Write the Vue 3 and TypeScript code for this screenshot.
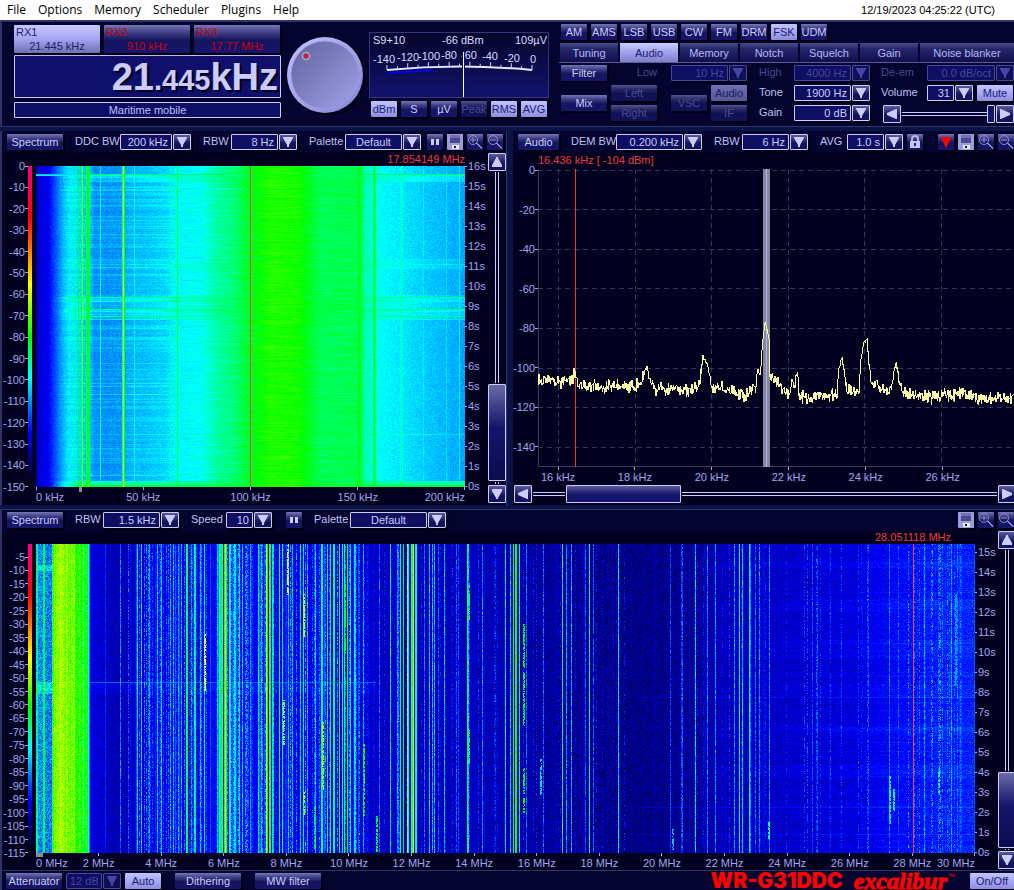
<script setup lang="ts">
import { onMounted, ref } from 'vue'

interface Combo {
  label: string
  labelWidth: number
  value: string
  width: number
  center?: boolean
}
type Stop = [number, number]

const menu = ['File', 'Options', 'Memory', 'Scheduler', 'Plugins', 'Help']
const receivers = [
  { name: 'RX1', freq: '21.445 kHz', on: true },
  { name: 'RX2', freq: '910 kHz', on: false },
  { name: 'RX3', freq: '17.77 MHz', on: false },
]
const meterButtons = [
  { t: 'dBm', c: 'on' },
  { t: 'S', c: '' },
  { t: 'µV', c: '' },
  { t: 'Peak', c: 'dim' },
  { t: 'RMS', c: 'on' },
  { t: 'AVG', c: 'on' },
]
const modes = ['AM', 'AMS', 'LSB', 'USB', 'CW', 'FM', 'DRM', 'FSK', 'UDM']
const tabs = ['Tuning', 'Audio', 'Memory', 'Notch', 'Squelch', 'Gain', 'Noise blanker']
const meterScale = [
  { t: '-140', x: 4, y: 31 },
  { t: '-120', x: 28, y: 29 },
  { t: '-100', x: 49, y: 28 },
  { t: '-80', x: 72, y: 27 },
  { t: '-60', x: 92, y: 27 },
  { t: '-40', x: 113, y: 28 },
  { t: '-20', x: 135, y: 30 },
  { t: '0', x: 161, y: 31 },
]
const meterTicks = Array.from({ length: 15 }, (_, i) => {
  const t = i / 14
  const x = 18 + 145 * t
  const y = 38 - 14 * t * (1 - t)
  return { x, y, h: i % 2 ? 3 : 5 }
})

const ddcCombos: Combo[] = [
  { label: 'DDC BW', labelWidth: 45, value: '200 kHz', width: 52 },
  { label: 'RBW', labelWidth: 28, value: '8 Hz', width: 47 },
  { label: 'Palette', labelWidth: 36, value: 'Default', width: 57, center: true },
]
const demCombos: Combo[] = [
  { label: 'DEM BW', labelWidth: 45, value: '0.200 kHz', width: 67 },
  { label: 'RBW', labelWidth: 28, value: '6 Hz', width: 47 },
  { label: 'AVG', labelWidth: 27, value: '1.0 s', width: 37 },
]
const wideCombos: Combo[] = [
  { label: 'RBW', labelWidth: 28, value: '1.5 kHz', width: 57 },
  { label: 'Speed', labelWidth: 35, value: '10', width: 27 },
]

const range = (n: number, f: (i: number) => string) => Array.from({ length: n }, (_, i) => f(i))
const ddcLevels = range(16, (i) => `${-10 * i}`)
const demLevels = range(8, (i) => `${-20 * i}`)
const wideLevels = range(23, (i) => `${-5 * (i + 1)}`)
const ddcTimes = range(17, (i) => `${16 - i}s`)
const wideTimes = range(16, (i) => `${15 - i}s`)
const ddcFreqs = range(5, (i) => `${50 * i} kHz`)
const demFreqs = range(6, (i) => `${16 + 2 * i} kHz`)
const wideFreqs = range(16, (i) => `${2 * i} MHz`)

function generator(seed: number) {
  let s = seed
  return () => {
    s = (s + 0x6d2b79f5) | 0
    let t = Math.imul(s ^ (s >>> 15), 1 | s)
    t = (t + Math.imul(t ^ (t >>> 7), 61 | t)) ^ t
    return ((t ^ (t >>> 14)) >>> 0) / 4294967296
  }
}

function interpolate(stops: Stop[], x: number) {
  for (let i = 1; i < stops.length; i++) {
    if (x <= stops[i][0]) {
      const [x0, y0] = stops[i - 1]
      const [x1, y1] = stops[i]
      return y0 + ((y1 - y0) * (x - x0)) / (x1 - x0)
    }
  }
  return stops[stops.length - 1][1]
}

const palette: [number, number, number, number][] = [
  [0, 0, 0, 10],
  [0.17, 0, 0, 255],
  [0.34, 0, 255, 255],
  [0.47, 0, 255, 0],
  [0.63, 255, 255, 0],
  [0.835, 255, 0, 0],
  [1, 255, 0, 128],
]
function color(v: number): [number, number, number] {
  const c = Math.max(0, Math.min(1, v))
  for (let i = 1; i < palette.length; i++) {
    if (c <= palette[i][0]) {
      const a = palette[i - 1]
      const b = palette[i]
      const t = (c - a[0]) / (b[0] - a[0])
      return [a[1] + (b[1] - a[1]) * t, a[2] + (b[2] - a[2]) * t, a[3] + (b[3] - a[3]) * t]
    }
  }
  return [255, 0, 128]
}

function paint(canvas: HTMLCanvasElement, level: (x: number, y: number) => number, marker: number) {
  const ctx = canvas.getContext('2d')
  if (!ctx) return
  const { width, height } = canvas
  const img = ctx.createImageData(width, height)
  for (let y = 0; y < height; y++) {
    for (let x = 0; x < width; x++) {
      const [r, g, b] = x === marker ? [255, 60, 60] : color(level(x, y))
      const o = (y * width + x) * 4
      img.data[o] = r
      img.data[o + 1] = g
      img.data[o + 2] = b
      img.data[o + 3] = 255
    }
  }
  ctx.putImageData(img, 0, 0)
}

const ddcCanvas = ref<HTMLCanvasElement>()
const wideCanvas = ref<HTMLCanvasElement>()

function drawDdc(canvas: HTMLCanvasElement) {
  const rnd = generator(7)
  const base: Stop[] = [
    [0, 0.09], [2, 0.14], [12, 0.16], [15, 0.19], [20, 0.23], [27, 0.29], [33, 0.325], [42, 0.31],
    [54, 0.29], [58, 0.26], [85, 0.265], [92, 0.285], [110, 0.295], [130, 0.31], [140, 0.335],
    [165, 0.345], [178, 0.38], [198, 0.41], [212, 0.45], [235, 0.49], [262, 0.48], [274, 0.45],
    [285, 0.425], [310, 0.43], [324, 0.43], [328, 0.38], [345, 0.34], [365, 0.325], [390, 0.305], [429, 0.28],
  ]
  const lines: Record<number, number> = {
    39: 0.38, 42: 0.44, 45: 0.42, 46: 0.54, 50: 0.42, 51: 0.46, 52: 0.47, 53: 0.43, 64: 0.34,
    86: 0.38, 87: 0.6, 88: 0.45, 98: 0.36, 134: 0.37, 141: 0.43, 322: 0.46, 323: 0.46, 324: 0.45,
    327: 0.42, 337: 0.42, 338: 0.45, 339: 0.41, 364: 0.36, 365: 0.37, 366: 0.35, 387: 0.33, 410: 0.32, 423: 0.34,
  }
  const rows = Array.from({ length: canvas.height }, () => rnd() * rnd() * rnd())
  const rowsRight = rows.map(() => rnd() - 0.5)
  let streak = 0
  paint(canvas, (x, y) => {
    const b = interpolate(base, x)
    let v = b
    const blockNoise = (rnd() - 0.5) * 0.034
    const left = Math.max(0, Math.min(1, (x - 14) / 25))
    // Raised rows show mostly where the background is weak
    const lift = left * Math.max(0, Math.min(1, (0.44 - b) / 0.12))
    streak = streak * 0.9 + (rnd() - 0.5) * 0.014
    v += blockNoise * (x > 145 && x < 330 ? 0.4 : 1)
    if (x > 145 && x < 330) v += rowsRight[y] * 0.018 + streak * 0.7
    if (x < 145) v += rows[y] * 0.06 * left
    if (y >= 10 && y <= 15 && x > 50) v += 0.03 * lift
    if (y > 92 && y < 104) v += (0.035 * rows[y] + 0.01) * lift
    if (y > 128 && y < 154) v += (0.015 + rows[y] * 0.05) * lift
    if (lines[x]) v = Math.max(v, lines[x] + blockNoise)
    if (y === 131 || y === 143 || y === 150) v = Math.max(v, 0.37 * left) + 0.025 * lift
    if (y === 144 || y === 268) v += 0.03 * lift
    if (y === 98) v += 0.02 * lift
    if (y === 8 || y === 9) v = Math.max(v, y === 8 ? (x > 50 ? 0.43 : 0.3) : 0.33)
    if (y >= 315) v = Math.max(v + 0.05 * lift, (y > 318 ? 0.44 : 0.38) * left)
    return v
  }, 214)
}

function drawWide(canvas: HTMLCanvasElement) {
  const rnd = generator(31)
  const base: Stop[] = [
    [0, 0.27], [15, 0.25], [16, 0.5], [18, 0.56], [37, 0.53], [41, 0.49], [51, 0.46], [52, 0.36], [54, 0.15],
    [80, 0.115], [98, 0.13], [118, 0.15], [150, 0.155], [185, 0.17], [250, 0.15], [305, 0.15], [325, 0.13],
    [360, 0.125], [460, 0.12], [500, 0.105], [560, 0.09], [600, 0.085], [655, 0.09], [680, 0.115], [760, 0.13],
    [820, 0.14], [855, 0.16], [890, 0.175], [939, 0.185],
  ]
  const density: Stop[] = [
    [54, 0], [78, 0.15], [100, 0.35], [118, 0.65], [320, 0.65], [335, 0.3], [410, 0.4], [500, 0.25], [650, 0.2], [760, 0.15], [939, 0.3],
  ]
  const n = canvas.width
  const cols = Array.from({ length: n }, (_, x) => interpolate(base, x))
  const jitter = Array.from({ length: n }, (_, x) => (x > 500 && x < 680 ? 0.05 : 0.035))
  for (let x = 54; x < n; x++) {
    if (rnd() < interpolate(density, x)) {
      const p = rnd()
      cols[x] += p * (x < 325 ? 0.09 : 0.04)
      jitter[x] = rnd() < 0.7 ? 0.13 * p + 0.04 : 0.04
    }
  }
  for (let x = 17; x < 51; x++) {
    cols[x] += (rnd() - 0.5) * 0.09
    jitter[x] = 0.07
  }
  for (let x = 0; x < 17; x++) jitter[x] = 0.08
  const lines: Stop[] = [
    [0, 0.33], [1, 0.42], [7, 0.44], [8, 0.46], [84, 0.25], [101, 0.31], [105, 0.31], [113, 0.27], [121, 0.3],
    [125, 0.31], [134, 0.28], [137, 0.29], [142, 0.28], [145, 0.29], [150, 0.41], [151, 0.48], [155, 0.27],
    [158, 0.33], [159, 0.47], [164, 0.3], [168, 0.34], [181, 0.3], [183, 0.38], [184, 0.44], [185, 0.43], [186, 0.38],
    [188, 0.49], [189, 0.66], [190, 0.42], [193, 0.38], [194, 0.34], [198, 0.33], [199, 0.32], [203, 0.33], [206, 0.3],
    [214, 0.27], [222, 0.33], [225, 0.3], [230, 0.61], [231, 0.46], [233, 0.52], [234, 0.43], [236, 0.42], [237, 0.3],
    [243, 0.4], [246, 0.34], [252, 0.3], [256, 0.29], [264, 0.32], [267, 0.35], [271, 0.29], [279, 0.31], [285, 0.4],
    [286, 0.34], [291, 0.33], [294, 0.43], [297, 0.4], [298, 0.39], [303, 0.46], [306, 0.39], [308, 0.39], [311, 0.47],
    [314, 0.34], [318, 0.34], [319, 0.3], [327, 0.27], [343, 0.23], [354, 0.32], [361, 0.27], [362, 0.25], [364, 0.36],
    [367, 0.46], [371, 0.57], [372, 0.37], [375, 0.36], [376, 0.41], [377, 0.6], [379, 0.38], [380, 0.36], [388, 0.24],
    [393, 0.3], [396, 0.29], [398, 0.29], [402, 0.22], [408, 0.29], [420, 0.22], [422, 0.21], [431, 0.42], [432, 0.3],
    [446, 0.25], [469, 0.32], [474, 0.3], [477, 0.43], [479, 0.43], [480, 0.47], [483, 0.34], [490, 0.24], [507, 0.23],
    [526, 0.34], [530, 0.27], [535, 0.27], [549, 0.22], [553, 0.34], [557, 0.22], [582, 0.31], [634, 0.2], [645, 0.2],
    [646, 0.22], [659, 0.3], [671, 0.24], [679, 0.25], [698, 0.26], [703, 0.34], [706, 0.3], [713, 0.35], [714, 0.25],
    [719, 0.22], [723, 0.25], [733, 0.25], [776, 0.2], [781, 0.2], [832, 0.2], [853, 0.24], [862, 0.21], [888, 0.26],
    [902, 0.22], [906, 0.22], [915, 0.27], [921, 0.23], [924, 0.22],
  ]
  for (const [x, v] of lines) {
    cols[x] = v
    jitter[x] = v > 0.35 ? 0.06 : 0.1
  }
  // Short bursts: column, first row, last row, level
  const bursts = [
    [168, 90, 146, 0.62], [251, 0, 50, 0.6], [267, 50, 92, 0.58], [267, 248, 271, 0.56], [286, 178, 245, 0.56],
    [247, 156, 200, 0.56], [308, 40, 108, 0.43], [327, 200, 272, 0.48], [432, 41, 75, 0.41], [432, 186, 218, 0.41],
    [487, 80, 123, 0.47], [487, 128, 181, 0.46], [487, 224, 249, 0.46], [487, 254, 268, 0.47], [732, 278, 295, 0.35],
    [340, 272, 309, 0.46], [278, 262, 305, 0.45], [853, 232, 280, 0.35], [857, 245, 266, 0.35], [902, 228, 248, 0.35],
    [919, 50, 140, 0.28], [504, 215, 250, 0.32], [636, 285, 305, 0.3],
  ]
  const rowNoise = Array.from({ length: canvas.height }, () => rnd() * rnd())
  const wideBand = (y: number) => Math.max(0, Math.sin((y - 10) / 6.6)) ** 2
  paint(canvas, (x, y) => {
    let v = cols[x] + (rnd() - 0.5) * jitter[x] * 1.3
    if (x > 53 && x < 340) {
      if (y > 137 && y < 150) v += 0.015
      if (y === 138) v = Math.max(v, 0.21)
    }
    if (y === 138 && x < 480) v += 0.025
    if (x < 16 && ((y > 20 && y < 27) || (y > 137 && y < 150))) v += 0.06
    if (x > 600) {
      v += (wideBand(y) * 0.01 + rowNoise[y] * 0.025) * Math.min(1, (x - 600) / 200)
      if (y === 153 || y === 263 || y === 290) v += 0.035
    }
    for (const [bx, y0, y1, level] of bursts) {
      if ((x === bx || x === bx + 1) && y >= y0 && y <= y1 && rnd() > 0.25) v = level
    }
    return v
  }, 877)
}

function buildTrace() {
  const rnd = generator(12)
  const shape: Stop[] = [
    [0, 212], [18, 213], [35, 212], [36, 206], [41, 217], [62, 218], [79, 217], [97, 218], [104, 212], [107, 201], [109, 198],
    [113, 213], [118, 222], [122, 218], [135, 221], [149, 222], [160, 217], [163, 206], [165, 187], [167, 192], [170, 197],
    [173, 220], [184, 218], [195, 223], [207, 226], [217, 219], [219, 204], [220, 201], [222, 208], [225, 170], [227, 153],
    [229, 161], [231, 171], [232, 206], [234, 205], [236, 212], [240, 213], [246, 223], [251, 225], [255, 215], [259, 208],
    [262, 227], [272, 229], [282, 227], [299, 226], [301, 199], [304, 189], [306, 202], [309, 221], [321, 222], [323, 190],
    [326, 172], [329, 171], [331, 195], [334, 215], [337, 213], [342, 220], [352, 222], [355, 208], [358, 193], [361, 215],
    [364, 225], [378, 227], [395, 228], [419, 225], [429, 226], [442, 230], [462, 229], [476, 229],
  ]
  const points: string[] = []
  for (let x = 0; x <= 476; x++) {
    const y = interpolate(shape, x)
    const amp = y > 205 ? 8 : 2
    for (let k = 0; k < 2; k++) points.push(`${x},${Math.round(y + (rnd() + rnd() - 1) * amp)}`)
  }
  return points.join(' ')
}
const trace = buildTrace()

onMounted(() => {
  if (ddcCanvas.value) drawDdc(ddcCanvas.value)
  if (wideCanvas.value) drawWide(wideCanvas.value)
})
</script>

<template>
  <div class="app">
    <svg class="defs" aria-hidden="true">
      <symbol id="ic-pause" viewBox="0 0 16 16"><path d="M4 5h3v6H4zM9 5h3v6H9z" fill="#ccccff" /></symbol>
      <symbol id="ic-save" viewBox="0 0 16 16">
        <path d="M0 0h16v16H1l-1-1z" fill="#9c9cd8" />
        <path d="M3 1h10v8H3z" fill="#4a4a94" /><path d="M3 1h10v3H3z" fill="#7070ae" />
        <path d="M5 11h7v4H5z" fill="#e8e8ff" /><path d="M7 12h2v2H7z" fill="#101050" />
      </symbol>
      <symbol id="ic-zin" viewBox="0 0 16 16">
        <g fill="none" stroke="#8c8cd0"><circle cx="6" cy="6" r="4.5" /><path d="M6 3v6M3 6h6M9 9l6 6M10 9l5 5" /></g>
      </symbol>
      <symbol id="ic-zout" viewBox="0 0 16 16">
        <g fill="none" stroke="#8c8cd0"><circle cx="6" cy="6" r="4.5" /><path d="M3 6h6M9 9l6 6M10 9l5 5" /></g>
      </symbol>
      <symbol id="ic-lock" viewBox="0 0 16 16">
        <path d="M5 8V5a3 3 0 0 1 6 0v3" fill="none" stroke="#b4b4ec" stroke-width="2" />
        <path d="M3 7h10v7H3z" fill="#c4c4fa" /><path d="M7 9h2v3H7z" fill="#202070" />
      </symbol>
      <symbol id="ic-mark" viewBox="0 0 16 16"><path d="M3 3h10v1L9 12v1H7v-1L3 4z" fill="#f00" /></symbol>
      <symbol id="ic-down" viewBox="0 0 16 14"><path d="M3 2h10v1L9 10v2H7v-2L3 3z" fill="currentColor" /></symbol>
      <symbol id="ic-up" viewBox="0 0 16 16"><path d="M3 13h10v-2L9 4V3H7v1l-4 7z" fill="#ccccff" /></symbol>
      <symbol id="ic-dn" viewBox="0 0 16 16"><path d="M3 3h10v2l-4 7v1H7v-1L3 5z" fill="#ccccff" /></symbol>
      <symbol id="ic-left" viewBox="0 0 16 16"><path d="M13 3v10h-1L3 9V7l9-4z" fill="#ccccff" /></symbol>
      <symbol id="ic-right" viewBox="0 0 16 16"><path d="M3 3v10h1l9-4V7L4 3z" fill="#ccccff" /></symbol>
    </svg>

    <header class="menubar">
      <nav class="menu"><button v-for="m in menu" :key="m">{{ m }}</button></nav>
      <time class="clock">12/19/2023 04:25:22 (UTC)</time>
    </header>

    <section class="console">
      <div class="tuner">
        <div class="rx-row">
          <button v-for="r in receivers" :key="r.name" class="btn rx" :class="{ on: r.on }">
            <span>{{ r.name }}</span><span class="rx-freq">{{ r.freq }}</span>
          </button>
        </div>
        <div class="frequency"><span>21</span><span class="minor">.445</span><span>kHz</span></div>
        <div class="band">Maritime mobile</div>
      </div>

      <svg class="knob" width="80" height="84" viewBox="0 0 80 84" role="img" aria-label="Tuning knob">
        <defs>
          <linearGradient id="face" x1="0" y1="0" x2="1" y2="1">
            <stop offset="0" stop-color="#62629c" /><stop offset="1" stop-color="#a0a0ea" />
          </linearGradient>
          <linearGradient id="rim" x1="0" y1="0" x2="1" y2="1">
            <stop offset="0" stop-color="#c4c4ff" /><stop offset="1" stop-color="#8484cc" />
          </linearGradient>
        </defs>
        <circle cx="42" cy="44" r="38" fill="#00001a" />
        <circle cx="39" cy="41" r="38" fill="url(#rim)" />
        <circle cx="39" cy="41" r="34" fill="url(#face)" stroke="#9a9af0" />
        <circle cx="20" cy="22" r="3.5" fill="#c02030" stroke="#a8a8e8" stroke-width="1.5" />
      </svg>

      <div class="meter-col">
        <svg class="meter" width="180" height="66" viewBox="1 1 178 64">
          <g class="meter-text">
            <text x="4" y="12">S9+10</text><text x="73" y="12">-66 dBm</text><text x="178" y="12" text-anchor="end">109µV</text>
            <text v-for="s in meterScale" :key="s.t" :x="s.x" :y="s.y">{{ s.t }}</text>
          </g>
          <path d="M18 38Q90 31 163 38" fill="none" stroke="#e8e8ff" stroke-width="2" />
          <path v-for="t in meterTicks" :key="t.x" :d="`M${t.x} ${t.y}v${-t.h}`" stroke="#ccccff" />
          <path d="M18 41Q40 40 64 38" fill="none" stroke="#0000f0" stroke-width="2" />
          <path d="M93 19h3v47h-3z" fill="#101060" /><path d="M94 20h1v46h-1z" fill="#fff" />
        </svg>
        <div class="strip">
          <button v-for="b in meterButtons" :key="b.t" class="btn small" :class="b.c">{{ b.t }}</button>
        </div>
      </div>

      <div class="controls">
        <div class="strip modes">
          <button v-for="m in modes" :key="m" class="btn small" :class="{ on: m === 'FSK' }">{{ m }}</button>
        </div>
        <div class="tabs" role="tablist">
          <button v-for="t in tabs" :key="t" role="tab" class="tab" :class="{ on: t === 'Audio' }" :aria-selected="t === 'Audio'">{{ t }}</button>
        </div>
        <div class="audio-grid">
          <button class="btn g-filter">Filter</button>
          <button class="btn g-mix">Mix</button>
          <button class="btn dim g-left">Left</button>
          <button class="btn dim g-right">Right</button>
          <button class="btn dim g-vsc">VSC</button>
          <button class="btn dim-on g-audio">Audio</button>
          <button class="btn dim g-if">IF</button>
          <label class="g-low-l off" for="low">Low</label>
          <div class="combo g-low off"><select id="low" disabled><option>10 Hz</option></select><span class="arrow"><svg><use href="#ic-down" /></svg></span></div>
          <label class="g-high-l off" for="high">High</label>
          <div class="combo g-high off"><select id="high" disabled><option>4000 Hz</option></select><span class="arrow"><svg><use href="#ic-down" /></svg></span></div>
          <label class="g-tone-l" for="tone">Tone</label>
          <div class="combo g-tone"><select id="tone"><option>1900 Hz</option></select><span class="arrow"><svg><use href="#ic-down" /></svg></span></div>
          <label class="g-gain-l" for="gain">Gain</label>
          <div class="combo g-gain"><select id="gain"><option>0 dB</option></select><span class="arrow"><svg><use href="#ic-down" /></svg></span></div>
          <label class="g-deem-l off" for="deem">De-em</label>
          <div class="combo g-deem off"><select id="deem" disabled><option>0.0 dB/oct</option></select><span class="arrow"><svg><use href="#ic-down" /></svg></span></div>
          <label class="g-vol-l" for="vol">Volume</label>
          <div class="g-vol">
            <div class="combo vol"><select id="vol"><option>31</option></select><span class="arrow"><svg><use href="#ic-down" /></svg></span></div>
            <button class="btn on mute">Mute</button>
          </div>
          <div class="g-slider">
            <button class="step" aria-label="Volume down"><svg><use href="#ic-left" /></svg></button>
            <input type="range" min="0" max="31" value="31" aria-label="Volume level" />
            <button class="step" aria-label="Volume up"><svg><use href="#ic-right" /></svg></button>
          </div>
        </div>
      </div>
    </section>

    <main class="middle">
      <section class="panel edge">
        <div class="toolbar">
          <button class="btn title">Spectrum</button>
          <label v-for="c in ddcCombos" :key="c.label" class="field"><span :style="{ width: c.labelWidth + 'px' }">{{ c.label }}</span>
            <span class="combo"><select :class="{ center: c.center }" :style="{ width: c.width + 'px' }"><option>{{ c.value }}</option></select><span class="arrow"><svg><use href="#ic-down" /></svg></span></span>
          </label>
          <div class="icons">
            <button class="btn icon" aria-label="Pause"><svg><use href="#ic-pause" /></svg></button>
            <button class="btn icon" aria-label="Save"><svg><use href="#ic-save" /></svg></button>
            <button class="btn icon" aria-label="Zoom in"><svg><use href="#ic-zin" /></svg></button>
            <button class="btn icon" aria-label="Zoom out"><svg><use href="#ic-zout" /></svg></button>
          </div>
        </div>
        <div class="plot falls">
          <div class="readout end">17.854149 MHz</div>
          <div class="levels"><span v-for="l in ddcLevels" :key="l" class="lv">{{ l }}</span></div>
          <div class="heat"></div>
          <canvas ref="ddcCanvas" class="fall" width="429" height="321"></canvas>
          <div class="times"><span v-for="t in ddcTimes" :key="t" class="tm">{{ t }}</span></div>
          <div class="freqs ends"><span v-for="f in ddcFreqs" :key="f" class="fq"><b>{{ f }}</b></span><i class="grip ddc"></i></div>
          <div class="vbar">
            <button class="step" aria-label="Scroll up"><svg><use href="#ic-up" /></svg></button>
            <i class="rail" :style="{ flexGrow: 214 }"></i><i class="thumb" :style="{ flexGrow: 97 }"></i><i class="rail" :style="{ flexGrow: 2 }"></i>
            <button class="step" aria-label="Scroll down"><svg><use href="#ic-dn" /></svg></button>
          </div>
        </div>
      </section>

      <section class="panel">
        <div class="toolbar dem">
          <button class="btn title">Audio</button>
          <label v-for="c in demCombos" :key="c.label" class="field"><span :style="{ width: c.labelWidth + 'px' }">{{ c.label }}</span>
            <span class="combo"><select :style="{ width: c.width + 'px' }"><option>{{ c.value }}</option></select><span class="arrow"><svg><use href="#ic-down" /></svg></span></span>
          </label>
          <button class="btn icon lock" aria-label="Lock"><svg><use href="#ic-lock" /></svg></button>
          <div class="icons last">
            <button class="btn icon" aria-label="Marker"><svg><use href="#ic-mark" /></svg></button>
            <button class="btn icon" aria-label="Save"><svg><use href="#ic-save" /></svg></button>
            <button class="btn icon" aria-label="Zoom in"><svg><use href="#ic-zin" /></svg></button>
            <button class="btn icon" aria-label="Zoom out"><svg><use href="#ic-zout" /></svg></button>
          </div>
        </div>
        <div class="plot scope">
          <div class="readout">16.436 kHz [ -104 dBm]</div>
          <div class="levels"><span v-for="l in demLevels" :key="l" class="lv">{{ l }}</span></div>
          <svg class="graph" viewBox="0 0 476 298" preserveAspectRatio="none">
            <g stroke="#34345e" stroke-dasharray="5 4" shape-rendering="crispEdges">
              <path v-for="y in [1, 40, 80, 119, 159, 199, 238, 278]" :key="'h' + y" :d="`M0 ${y + 0.5}H476`" />
              <path v-for="x in [20, 97, 173, 250, 326, 403]" :key="'v' + x" :d="`M${x + 0.5} 0V298`" />
            </g>
            <path d="M.5 0V297.5H476" fill="none" stroke="#3a3a6c" />
            <path d="M37 0h1v298h-1z" fill="#e83c3c" shape-rendering="crispEdges" />
            <path d="M225 0h7v298h-7z" fill="#86869c" /><path d="M228 0h1v298h-1z" fill="#b0b0ff" />
            <polyline :points="trace" fill="none" stroke="#f8f8a8" shape-rendering="crispEdges" />
          </svg>
          <div class="freqs"><span v-for="f in demFreqs" :key="f" class="fq"><b>{{ f }}</b></span></div>
          <div class="hbar">
            <button class="step" aria-label="Scroll left"><svg><use href="#ic-left" /></svg></button>
            <i class="rail" :style="{ flexGrow: 32 }"></i><i class="thumb" :style="{ flexGrow: 114 }"></i><i class="rail" :style="{ flexGrow: 317 }"></i>
            <button class="step" aria-label="Scroll right"><svg><use href="#ic-right" /></svg></button>
          </div>
        </div>
      </section>
    </main>

    <section class="panel wide">
      <div class="toolbar">
        <button class="btn title">Spectrum</button>
        <label v-for="c in wideCombos" :key="c.label" class="field"><span :style="{ width: c.labelWidth + 'px' }">{{ c.label }}</span>
          <span class="combo"><select :style="{ width: c.width + 'px' }"><option>{{ c.value }}</option></select><span class="arrow"><svg><use href="#ic-down" /></svg></span></span>
        </label>
        <button class="btn icon pause" aria-label="Pause"><svg><use href="#ic-pause" /></svg></button>
        <label class="field"><span class="palette-label">Palette</span>
          <span class="combo"><select class="center long"><option>Default</option></select><span class="arrow"><svg><use href="#ic-down" /></svg></span></span>
        </label>
        <div class="icons last">
          <button class="btn icon" aria-label="Save"><svg><use href="#ic-save" /></svg></button>
          <button class="btn icon" aria-label="Zoom in"><svg><use href="#ic-zin" /></svg></button>
          <button class="btn icon" aria-label="Zoom out"><svg><use href="#ic-zout" /></svg></button>
        </div>
      </div>
      <div class="plot falls">
        <div class="readout marker">28.051118 MHz</div>
        <div class="levels"><span v-for="l in wideLevels" :key="l" class="lv">{{ l }}</span></div>
        <div class="heat"></div>
        <canvas ref="wideCanvas" class="fall" width="939" height="309"></canvas>
        <div class="times"><span v-for="t in wideTimes" :key="t" class="tm">{{ t }}</span></div>
        <div class="freqs ends"><span v-for="f in wideFreqs" :key="f" class="fq"><b>{{ f }}</b></span><i class="grip"></i></div>
        <div class="vbar">
          <button class="step" aria-label="Scroll up"><svg><use href="#ic-up" /></svg></button>
          <i class="rail" :style="{ flexGrow: 225 }"></i><i class="thumb" :style="{ flexGrow: 75 }"></i><i class="rail" :style="{ flexGrow: 1 }"></i>
          <button class="step" aria-label="Scroll down"><svg><use href="#ic-dn" /></svg></button>
        </div>
      </div>
    </section>

    <footer class="footer">
      <button class="btn att">Attenuator</button>
      <div class="combo off"><select class="att-value" disabled aria-label="Attenuation"><option>12 dB</option></select><span class="arrow"><svg><use href="#ic-down" /></svg></span></div>
      <button class="btn on auto">Auto</button>
      <button class="btn foot">Dithering</button>
      <button class="btn foot">MW filter</button>
      <div class="brand"><span class="model">WR-G31DDC</span><span class="name">excalibur</span><sup>™</sup></div>
      <button class="btn on power">On/Off</button>
    </footer>
  </div>
</template>

<style>
html, body { margin: 0; background: #0a1248; }
</style>

<style scoped>
.app {
  display: flex; flex-direction: column; box-sizing: border-box; height: 100vh; min-height: 640px; overflow: hidden;
  background: #0a1248; color: #c0c0f4; font: 11px/14px "Liberation Sans", Arial, sans-serif;
}
.app *, .app *::before, .app *::after { box-sizing: border-box; }
.defs { display: none; }
button, select, input { font: inherit; margin: 0; padding: 0; border: 0; color: inherit; }
button { white-space: nowrap; }
i { display: block; }

.menubar { display: flex; justify-content: space-between; align-items: center; flex: 0 0 20px; padding: 0 19px 0 7px; background: #fff; color: #000; }
.menu { display: flex; gap: 12px; font: 12px/20px "Open Sans", sans-serif; }
.menu button { background: none; }

.btn {
  flex: none; height: 16px; border-radius: 1px; color: #ccccff; text-align: center; line-height: 16px;
  background: linear-gradient(#7878b4, #42428a 25%, #14145e 55%, #16166c); box-shadow: 2px 2px 1px #000010;
}
.btn.on { background: linear-gradient(#c4c4ff, #a8a8f6 50%, #8e8edc); color: #1c1c70; }
.btn.dim { color: #4a4a96; background: linear-gradient(#54548c, #2a2a68 25%, #101050 55%, #12125c); }
.btn.dim-on { background: linear-gradient(#7474b0, #6060a4 50%, #5a5a98); color: #1c1c66; }
.off { color: #4a4a92; }

.console { display: flex; flex: 0 0 107px; padding: 2px 0 0 12px; overflow: hidden; background: #04042e; border: solid #2c3468; border-width: 2px 0 1px 2px; }
.tuner { flex: 0 0 267px; padding-top: 1px; }
.rx-row { display: flex; gap: 4px; }
.rx { display: flex; flex-direction: column; width: 86px; height: 28px; padding: 0 2px; line-height: 14px; text-align: left; color: #c8000c; }
.rx.on { background: linear-gradient(#c8c8ff, #a4a4f0 50%, #7070b0); }
.rx-freq { align-self: stretch; text-align: center; }
.frequency {
  display: flex; align-items: baseline; justify-content: flex-end; height: 43px; margin-top: 2px; padding: 0 2px; border: 1px solid #ccccff;
  border-radius: 1px; background: #10106c; color: #ccccff; font-size: 38px; font-weight: 700; line-height: 43px; text-shadow: 2px 2px 1px #00001c;
}
.minor { font-size: 29px; }
.band { height: 16px; margin-top: 4px; border: 1px solid #ccccff; border-radius: 1px; background: #0e0e66; text-align: center; line-height: 15px; }
.knob { flex: none; margin: 10px 0 0 5px; }
.meter-col { flex: 0 0 180px; margin: 8px 0 0 3px; }
.meter { display: block; border: 1px solid #34347c; background: linear-gradient(#05052c, #12126e); overflow: hidden; }
.meter-text { fill: #dcdcff; font-size: 11px; }
.strip { display: flex; gap: 4px; padding: 3px 2px; }
.small { width: 26px; }

.controls { flex: 1; min-width: 0; margin-left: 10px; }
.strip.modes { padding: 0 2px; height: 19px; }
.tabs { display: flex; gap: 2px; height: 20px; border-bottom: 1px solid #5a5a9c; padding-left: 1px; }
.tab { flex: 0 0 58px; color: #b8b8f4; background: linear-gradient(#4c4c8c, #26266a 30%, #10104e); }
.tab:last-child { flex: 1 0 92px; }
.tab.on { background: linear-gradient(#ccccff, #a0a0ec 50%, #8080c8); color: #1c1c70; }
.audio-grid {
  display: grid; grid-template-rows: repeat(6, 10px); align-items: start; padding: 2px 0 0 2px;
  grid-template-columns: 46px 4px 46px 14px 36px 4px 36px 12px 35px 76px 11px 46px minmax(87px, 1fr);
}
.g-filter { grid-area: 1 / 1 / 3; }
.g-mix { grid-area: 4 / 1 / 6; }
.g-left { grid-area: 3 / 3 / 5; }
.g-right { grid-area: 5 / 3 / 7; }
.g-vsc { grid-area: 4 / 5 / 6; }
.g-audio { grid-area: 3 / 7 / 5; }
.g-if { grid-area: 5 / 7 / 7; }
.g-low-l { grid-area: 1 / 3 / 3; text-align: right; }
.g-low { grid-area: 1 / 5 / 3 / 8; }
.g-high-l { grid-area: 1 / 9 / 3; }
.g-high { grid-area: 1 / 10 / 3; }
.g-tone-l { grid-area: 3 / 9 / 5; }
.g-tone { grid-area: 3 / 10 / 5; }
.g-gain-l { grid-area: 5 / 9 / 7; }
.g-gain { grid-area: 5 / 10 / 7; }
.g-deem-l { grid-area: 1 / 12 / 3; }
.g-deem { grid-area: 1 / 13 / 3; }
.g-vol-l { grid-area: 3 / 12 / 5; }
.g-vol { grid-area: 3 / 13 / 5; display: flex; gap: 4px; }
.g-slider { grid-area: 5 / 12 / 7 / 14; display: flex; gap: 1px; padding-left: 2px; }
.vol { width: 46px; }
.btn.mute { flex: 1; margin-right: 1px; }

.combo { display: flex; gap: 1px; color: #ccccff; }
.combo select {
  flex: 1 1 auto; min-width: 0; height: 16px; padding: 0 3px; appearance: none; border: 1px solid #ccccff; border-radius: 1px;
  background: #0e0e62; color: #ccccff; line-height: 14px; text-align: right; text-align-last: right; box-shadow: 2px 2px 1px #000010; opacity: 1;
}
.combo select.center { text-align: center; text-align-last: center; }
.arrow { flex: 0 0 18px; height: 16px; border: 1px solid #ccccff; border-radius: 1px; background: linear-gradient(#5a5a9c, #14145e 60%); box-shadow: 2px 2px 1px #000010; }
.arrow svg { display: block; width: 16px; height: 14px; }
.combo.off, .combo.off select { color: #4646a0; border-color: #4646a0; }
.combo.off .arrow { border-color: #4646a0; background: #101058; }

.step { display: block; flex: 0 0 18px; width: 18px; height: 18px; border: 1px solid #ccccff; border-radius: 1px; background: linear-gradient(#5a5a9c, #14145e 60%); }
.step svg { display: block; width: 16px; height: 16px; }
input[type='range'] {
  flex: 1; min-width: 0; width: 60px; height: 18px; appearance: none;
  background: linear-gradient(#ccccff, #ccccff) 0 7px / 100% 1px no-repeat, linear-gradient(#ccccff, #ccccff) 0 10px / 100% 1px no-repeat;
}
input[type='range']::-webkit-slider-thumb { appearance: none; width: 8px; height: 18px; border: 1px solid #ccccff; border-radius: 1px; background: #14146a; }

.middle { display: grid; grid-template-columns: minmax(0, 505fr) minmax(0, 501fr); gap: 6px; flex: 374 1 0; min-height: 0; margin-top: 4px; border-left: 2px solid #2c3468; }
.panel { display: flex; flex-direction: column; min-width: 0; min-height: 0; overflow: hidden; background: #020220; }
.edge { border-right: 1px solid #2c3468; }
.wide { flex: 360 1 0; margin-top: 4px; border: solid #2c3468; border-width: 1px 0 1px 2px; }
.toolbar { display: flex; align-items: flex-start; flex: 0 0 21px; padding: 3px 0 0 5px; background: #04042e; }
.wide .toolbar { padding-top: 2px; }
.title { width: 56px; }
.dem .title { width: 41px; }
.field { display: flex; flex: none; margin-left: 12px; white-space: nowrap; }
.field .combo select { flex: none; }
.palette-label { width: 36px; }
.field .long { width: 77px; }
.icons { display: flex; gap: 4px; margin-left: 6px; }
.icons.last { margin-left: auto; }
.icon { width: 16px; }
.icon svg { display: block; width: 16px; height: 16px; }
.lock { margin-left: 4px; }
.pause { margin-left: 14px; }

.plot { flex: 1; min-height: 0; display: grid; color: #a4a4ec; }
.falls { grid-template: 14px minmax(0, 1fr) 18px / 26px 4px 4px minmax(0, 1fr) 23px 18px; }
.wide .falls { grid-template: 13px minmax(0, 1fr) 17px / 26px 4px 4px minmax(0, 1fr) 23px 16px; }
.readout { grid-area: 1 / 4; color: #e83c3c; line-height: 15px; white-space: nowrap; }
.wide .readout { line-height: 13px; }
.readout.end { text-align: right; }
.readout.marker { padding-right: 24px; text-align: right; }
.levels { grid-area: 2 / 1; display: flex; flex-direction: column; justify-content: space-between; }
.lv { display: flex; align-items: center; justify-content: flex-end; height: 0; }
.lv::after { content: ''; width: 3px; height: 1px; background: #a4a4ec; }
.wide .levels { padding-top: 13px; }
.heat { grid-area: 2 / 2; background: linear-gradient(#ff0080, #f00 16%, #ff0 37%, #0f0 53%, #0ff 66%, #00f 83%, #000); }
.fall { grid-area: 2 / 4; display: block; width: 100%; height: 100%; image-rendering: pixelated; }
.times { grid-area: 2 / 5; display: flex; flex-direction: column; justify-content: space-between; padding-bottom: 1px; }
.wide .times { padding-top: 8px; }
.tm { display: flex; align-items: center; gap: 1px; height: 0; }
.tm::before { content: ''; width: 2px; height: 1px; background: #a4a4ec; }
.freqs { grid-area: 3 / 4; position: relative; display: flex; justify-content: space-between; }
.fq { display: flex; flex-direction: column; align-items: center; width: 0; white-space: nowrap; }
.fq::before { content: ''; flex: none; width: 1px; height: 3px; background: #a4a4ec; }
.fq b { font-weight: 400; }
.ends .fq:first-child { align-items: flex-start; }
.ends .fq:nth-last-child(2) { align-items: flex-end; }
.grip { position: absolute; top: 0; left: 0; width: 7px; height: 4px; background: #8c8c9c; }
.grip.ddc { left: 10%; width: 3px; height: 5px; }
.vbar { grid-area: 1 / 6 / 4; display: flex; flex-direction: column; align-items: center; gap: 1px; padding: 1px 0 2px; overflow: hidden; }
.wide .vbar { align-items: flex-start; padding: 0 0 1px; }
.rail { flex: 0 1 0; }
.vbar .rail { width: 4px; margin: 0 7px; border: solid #ccccff; border-width: 0 1px; }
.thumb { flex: 0 1 0; border: 1px solid #ccccff; border-radius: 1px; }
.vbar .thumb { width: 18px; background: linear-gradient(#6a6aa8, #14146a 45%, #0c0c50); }
.hbar { grid-area: 4 / 1 / 5 / 3; display: flex; align-items: center; gap: 1px; padding: 0 0 2px 1px; overflow: hidden; margin-right: -2px; }
.hbar .rail { height: 4px; border: solid #ccccff; border-width: 1px 0; }
.hbar .thumb { height: 18px; background: linear-gradient(#5a5a9c, #14146a 55%); }
.scope { grid-template: 17px minmax(0, 1fr) 17px 21px / 25px minmax(0, 1fr); }
.scope .readout { grid-area: 1 / 2; line-height: 17px; }
.scope .levels { padding: 1px 0 20px; }
.graph { grid-area: 2 / 2; display: block; width: 100%; height: 100%; }
.scope .freqs { grid-area: 3 / 2; padding: 0 15% 0 20px; }

.footer { display: flex; align-items: flex-start; flex: 0 0 19px; padding: 2px 0 0 4px; background: #04042e; border-left: 2px solid #2c3468; overflow: hidden; }
.att { width: 56px; margin-right: 4px; }
.att-value { width: 36px; }
.auto { width: 36px; margin-left: 4px; }
.foot { width: 66px; margin-left: 14px; }
.brand { display: flex; align-items: center; height: 16px; margin-left: auto; margin-right: 15px; color: #f00; white-space: nowrap; }
.model { font: 900 21px/16px Inter, sans-serif; }
.name { margin-left: 11px; font: italic 700 24px/16px "Liberation Serif", serif; -webkit-text-stroke: 1px #f00; }
.brand sup { align-self: flex-start; font-size: 8px; line-height: 8px; }
.power { width: 44px; }
</style>
